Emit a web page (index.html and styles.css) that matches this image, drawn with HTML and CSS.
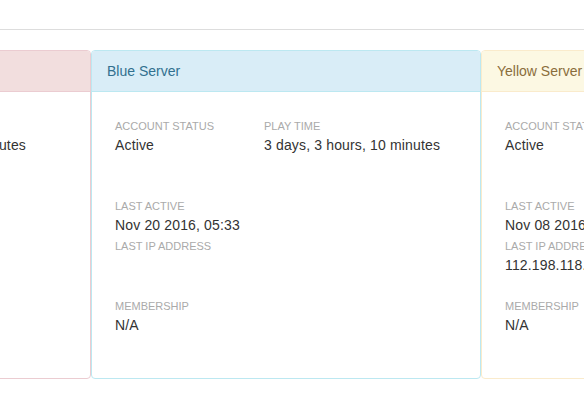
FILE: index.html
```html
<!DOCTYPE html>
<html>
<head>
<meta charset="utf-8">
<link rel="stylesheet" href="styles.css">
</head>
<body>
<div class="topbar"></div>
<div class="viewport">
  <div class="track">
    <section class="panel panel-red">
      <div class="panel-heading">Red Server</div>
      <div class="panel-body">
        <div class="row-first">
          <div class="field"><div class="label">Account Status</div><div class="value">Active</div></div>
          <div class="field"><div class="label">Play Time</div><div class="value">1 day, 1 hour, 5 minutes</div></div>
        </div>
        <div class="field tight"><div class="label">Last Active</div><div class="value">Nov 18 2016, 11:02</div></div>
        <div class="field spaced"><div class="label">Last IP Address</div><div class="value"></div></div>
        <div class="field last"><div class="label">Membership</div><div class="value">N/A</div></div>
      </div>
    </section>
    <section class="panel panel-blue">
      <div class="panel-heading">Blue Server</div>
      <div class="panel-body">
        <div class="row-first">
          <div class="field"><div class="label">Account Status</div><div class="value">Active</div></div>
          <div class="field"><div class="label">Play Time</div><div class="value">3 days, 3 hours, 10 minutes</div></div>
        </div>
        <div class="field tight"><div class="label">Last Active</div><div class="value">Nov 20 2016, 05:33</div></div>
        <div class="field spaced"><div class="label">Last IP Address</div><div class="value"></div></div>
        <div class="field last"><div class="label">Membership</div><div class="value">N/A</div></div>
      </div>
    </section>
    <section class="panel panel-yellow">
      <div class="panel-heading">Yellow Server</div>
      <div class="panel-body">
        <div class="row-first">
          <div class="field"><div class="label">Account Status</div><div class="value">Active</div></div>
          <div class="field"><div class="label">Play Time</div><div class="value">5 hours, 42 minutes</div></div>
        </div>
        <div class="field tight"><div class="label">Last Active</div><div class="value">Nov 08 2016, 21:17</div></div>
        <div class="field spaced"><div class="label">Last IP Address</div><div class="value">112.198.118.24</div></div>
        <div class="field last"><div class="label">Membership</div><div class="value">N/A</div></div>
      </div>
    </section>
  </div>
</div>
</body>
</html>
```
FILE: styles.css
```css
html, body {
  margin: 0;
  padding: 0;
  background: #fff;
  font-family: "Liberation Sans", Arial, sans-serif;
  font-size: 14px;
  line-height: 20px;
  color: #333;
}
.topbar {
  height: 29px;
  border-bottom: 1px solid #ddd;
}
.viewport {
  margin-top: 20px;
  overflow: hidden;
  width: 584px;
}
.track {
  display: flex;
  margin-left: -299px;
}
.panel {
  flex: none;
  box-sizing: border-box;
  width: 390px;
  border: 1px solid;
  border-radius: 4px;
  background: #fff;
}
.panel-heading {
  height: 20px;
  padding: 10px 15px;
  border-bottom: 1px solid;
  border-radius: 3px 3px 0 0;
  white-space: nowrap;
}
.panel-red { border-color: #ebccd1; }
.panel-red .panel-heading { background: #f2dede; border-color: #ebccd1; color: #a94442; }
.panel-blue { border-color: #bce8f1; }
.panel-blue .panel-heading { background: #d9edf7; border-color: #bce8f1; color: #31708f; }
.panel-yellow { border-color: #faebcc; }
.panel-yellow .panel-heading { background: #fcf8e3; border-color: #faebcc; color: #8a6d3b; }
.panel-body {
  padding: 26px 23px 43px;
}
.row-first {
  display: grid;
  grid-template-columns: 149px 1fr;
  margin-bottom: 40px;
}
.field {
  margin-bottom: 3px;
  white-space: nowrap;
}
.field.spaced { margin-bottom: 23px; }
.field.last { margin-bottom: 0; }
.label {
  font-size: 11px;
  line-height: 16px;
  color: #aaa;
  text-transform: uppercase;
}
.value {
  min-height: 20px;
  padding-top: 1px;
  letter-spacing: 0.15px;
  color: #333;
}
```
